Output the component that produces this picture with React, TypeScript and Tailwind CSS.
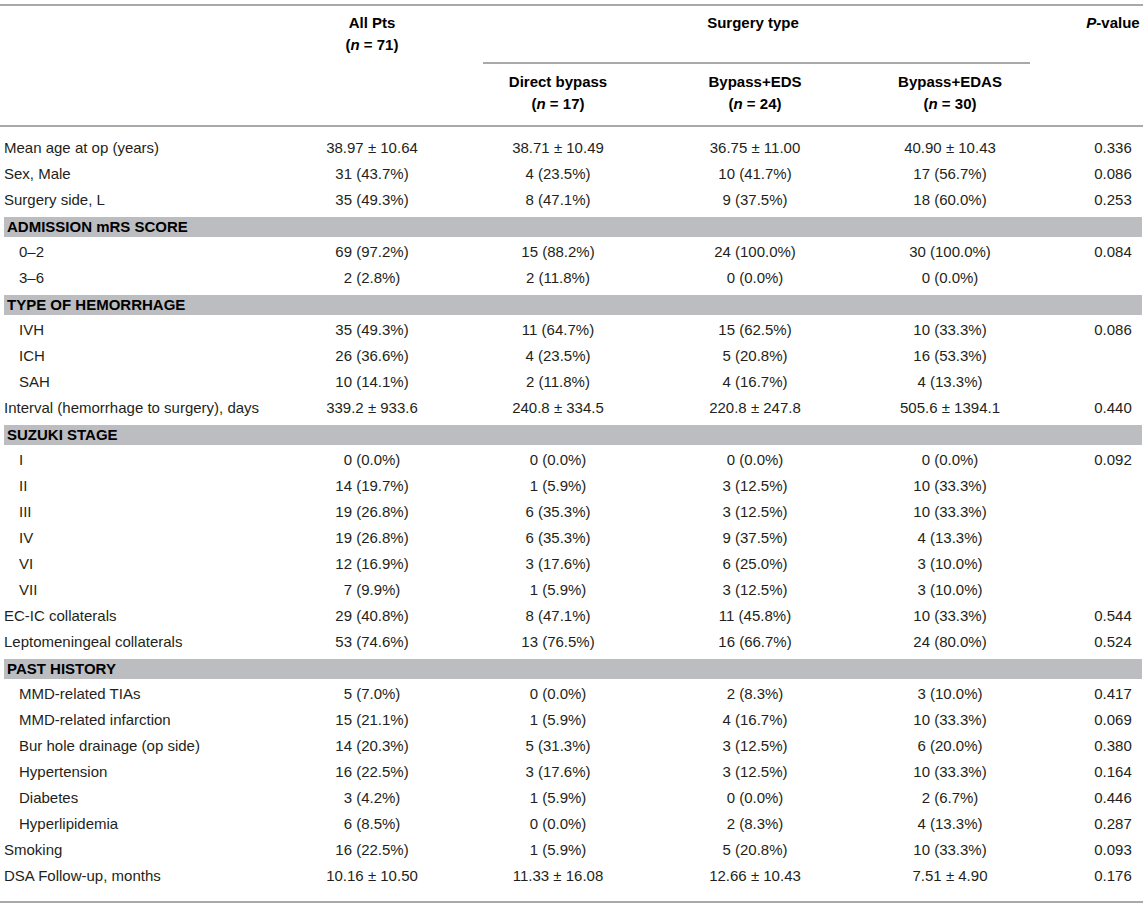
type Row =
    | {kind: "section"; label: string}
    | {kind: "data"; label: string; indent?: boolean; values: string[]};

const rows: Row[] = [
    {kind: "data", label: "Mean age at op (years)", values: ["38.97 ± 10.64", "38.71 ± 10.49", "36.75 ± 11.00", "40.90 ± 10.43", "0.336"]},
    {kind: "data", label: "Sex, Male", values: ["31 (43.7%)", "4 (23.5%)", "10 (41.7%)", "17 (56.7%)", "0.086"]},
    {kind: "data", label: "Surgery side, L", values: ["35 (49.3%)", "8 (47.1%)", "9 (37.5%)", "18 (60.0%)", "0.253"]},
    {kind: "section", label: "ADMISSION mRS SCORE"},
    {kind: "data", label: "0–2", indent: true, values: ["69 (97.2%)", "15 (88.2%)", "24 (100.0%)", "30 (100.0%)", "0.084"]},
    {kind: "data", label: "3–6", indent: true, values: ["2 (2.8%)", "2 (11.8%)", "0 (0.0%)", "0 (0.0%)", ""]},
    {kind: "section", label: "TYPE OF HEMORRHAGE"},
    {kind: "data", label: "IVH", indent: true, values: ["35 (49.3%)", "11 (64.7%)", "15 (62.5%)", "10 (33.3%)", "0.086"]},
    {kind: "data", label: "ICH", indent: true, values: ["26 (36.6%)", "4 (23.5%)", "5 (20.8%)", "16 (53.3%)", ""]},
    {kind: "data", label: "SAH", indent: true, values: ["10 (14.1%)", "2 (11.8%)", "4 (16.7%)", "4 (13.3%)", ""]},
    {kind: "data", label: "Interval (hemorrhage to surgery), days", values: ["339.2 ± 933.6", "240.8 ± 334.5", "220.8 ± 247.8", "505.6 ± 1394.1", "0.440"]},
    {kind: "section", label: "SUZUKI STAGE"},
    {kind: "data", label: "I", indent: true, values: ["0 (0.0%)", "0 (0.0%)", "0 (0.0%)", "0 (0.0%)", "0.092"]},
    {kind: "data", label: "II", indent: true, values: ["14 (19.7%)", "1 (5.9%)", "3 (12.5%)", "10 (33.3%)", ""]},
    {kind: "data", label: "III", indent: true, values: ["19 (26.8%)", "6 (35.3%)", "3 (12.5%)", "10 (33.3%)", ""]},
    {kind: "data", label: "IV", indent: true, values: ["19 (26.8%)", "6 (35.3%)", "9 (37.5%)", "4 (13.3%)", ""]},
    {kind: "data", label: "VI", indent: true, values: ["12 (16.9%)", "3 (17.6%)", "6 (25.0%)", "3 (10.0%)", ""]},
    {kind: "data", label: "VII", indent: true, values: ["7 (9.9%)", "1 (5.9%)", "3 (12.5%)", "3 (10.0%)", ""]},
    {kind: "data", label: "EC-IC collaterals", values: ["29 (40.8%)", "8 (47.1%)", "11 (45.8%)", "10 (33.3%)", "0.544"]},
    {kind: "data", label: "Leptomeningeal collaterals", values: ["53 (74.6%)", "13 (76.5%)", "16 (66.7%)", "24 (80.0%)", "0.524"]},
    {kind: "section", label: "PAST HISTORY"},
    {kind: "data", label: "MMD-related TIAs", indent: true, values: ["5 (7.0%)", "0 (0.0%)", "2 (8.3%)", "3 (10.0%)", "0.417"]},
    {kind: "data", label: "MMD-related infarction", indent: true, values: ["15 (21.1%)", "1 (5.9%)", "4 (16.7%)", "10 (33.3%)", "0.069"]},
    {kind: "data", label: "Bur hole drainage (op side)", indent: true, values: ["14 (20.3%)", "5 (31.3%)", "3 (12.5%)", "6 (20.0%)", "0.380"]},
    {kind: "data", label: "Hypertension", indent: true, values: ["16 (22.5%)", "3 (17.6%)", "3 (12.5%)", "10 (33.3%)", "0.164"]},
    {kind: "data", label: "Diabetes", indent: true, values: ["3 (4.2%)", "1 (5.9%)", "0 (0.0%)", "2 (6.7%)", "0.446"]},
    {kind: "data", label: "Hyperlipidemia", indent: true, values: ["6 (8.5%)", "0 (0.0%)", "2 (8.3%)", "4 (13.3%)", "0.287"]},
    {kind: "data", label: "Smoking", values: ["16 (22.5%)", "1 (5.9%)", "5 (20.8%)", "10 (33.3%)", "0.093"]},
    {kind: "data", label: "DSA Follow-up, months", values: ["10.16 ± 10.50", "11.33 ± 16.08", "12.66 ± 10.43", "7.51 ± 4.90", "0.176"]},
];

const GRID = "grid grid-cols-[279px_186px_186px_208px_182px_1fr]";

function HeaderCell({title, n}: {title: string; n: string}) {
    return (
        <div className="pt-[7px] pb-[10px] text-center leading-[22px]">
            <div>{title}</div>
            <div>(<i>n</i> = {n})</div>
        </div>
    );
}

function TableRow({row}: {row: Row}) {
    if (row.kind === "section") {
        return (
            <div className="h-[26px] pt-[4px] pl-[4px] pr-[1px]">
                <div className="flex h-[20px] items-center bg-[#bcbdc0] pl-[3px] font-bold text-black">
                    {row.label}
                </div>
            </div>
        );
    }
    return (
        <div className={`${GRID} h-[26px] items-center text-[#231f20]`}>
            <div className={row.indent ? "pl-[19px]" : "pl-[4px]"}>{row.label}</div>
            {row.values.slice(0, 4).map((v, i) => (
                <div key={i} className="text-center">{v}</div>
            ))}
            <div className="pl-[42px] text-center">{row.values[4]}</div>
        </div>
    );
}

export default function App() {
    return (
        <div className="min-h-[912px] bg-white pt-[4px] font-['Liberation_Sans',Arial,sans-serif] text-[15px]">
            <div className="w-[1143px] border-t-2 border-b-2 border-[#a7a9ac] pb-[12px]">
                <div className={`${GRID} border-b-2 border-[#a7a9ac] font-bold text-black`}>
                    <div className="row-span-2"/>
                    <div className="row-span-2 pt-[6px] text-center leading-[22px]">
                        <div>All Pts</div>
                        <div>(<i>n</i> = 71)</div>
                    </div>
                    <div className="col-span-3 h-[56px] pt-[6px] leading-[22px]">
                        <div className="text-center">Surgery type</div>
                    </div>
                    <div className="row-span-2 pt-[6px] pl-[42px] text-center leading-[22px]">
                        <i>P</i>-value
                    </div>
                    <div className="col-span-3 col-start-3 ml-[18px] mr-[11px] border-t-2 border-[#a7a9ac]"/>
                    <div className="col-start-3">
                        <HeaderCell title="Direct bypass" n="17"/>
                    </div>
                    <HeaderCell title="Bypass+EDS" n="24"/>
                    <HeaderCell title="Bypass+EDAS" n="30"/>
                </div>
                <div className="pt-[8px]">
                    {rows.map((r, i) => (
                        <TableRow key={i} row={r}/>
                    ))}
                </div>
            </div>
        </div>
    );
}
